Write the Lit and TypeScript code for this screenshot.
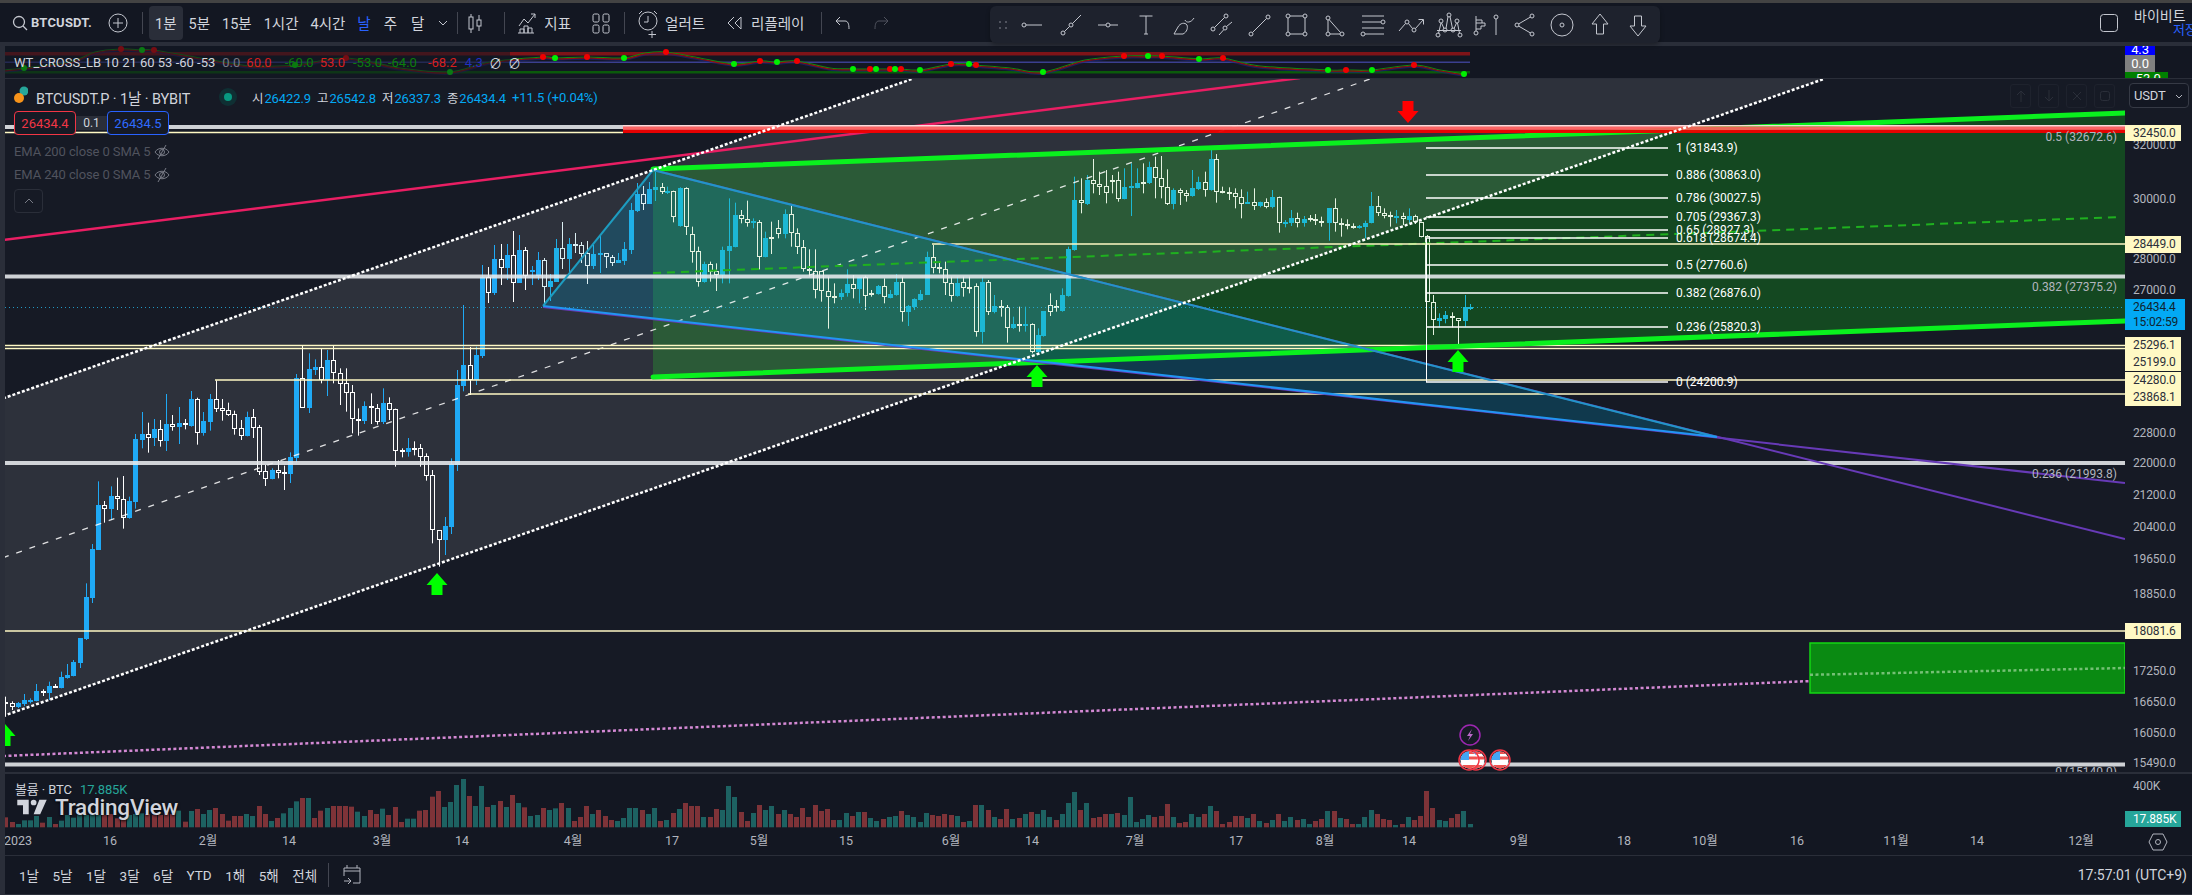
import { LitElement, html, svg, css } from "lit";
import { customElement } from "lit/decorators.js";

type C = number[];
// zoom-space candle data: [high, top, bottom, low, up]
const A: C[] = [[1190,1207,1212,1250,0],[1204,1210,1220,1230,0],[1206,1210,1222,1224,1],[1182,1200,1212,1218,1],[1195,1200,1203,1210,1],[1152,1174,1203,1204,1],[1168,1173,1178,1188,0],[1145,1158,1180,1200,1],[1152,1159,1163,1164,0],[1115,1132,1164,1165,1],[1092,1125,1134,1136,1],[1080,1086,1128,1129,1],[1014,1014,1089,1104,1],[850,891,1017,1020,1],[732,747,893,909,1],[544,615,750,750,1],[603,616,626,668,0],[559,588,627,660,1],[533,589,598,630,0],[528,598,653,686,0],[590,603,654,656,1],[402,417,606,626,1],[336,402,419,445,1],[368,403,413,458,0],[357,387,414,438,1],[360,388,423,440,0],[282,372,423,453,1],[345,373,380,392,0],[321,369,381,432,1],[357,370,376,388,0],[273,297,378,380,1],[293,297,398,434,0],[336,363,399,407,1],[282,297,366,392,1],[241,298,326,336,0],[297,325,332,362,0],[308,331,345,348,0],[332,343,386,404,0],[360,385,407,420,0],[335,351,408,409,1],[327,352,383,414,0],[375,382,515,525,0],[495,514,536,558,0],[505,510,537,538,1],[480,511,518,535,0],[497,516,522,570,0],[457,472,522,549,1],[222,235,473,487,1],[137,235,323,323,0],[160,207,324,339,1],[178,201,210,225,1],[147,202,241,250,0],[150,180,240,288,1],[136,181,220,250,0],[205,220,251,315,0],[205,250,278,335,0],[255,277,358,400,0],[325,357,361,407,0],[304,318,363,372,1],[280,319,325,372,0],[312,325,366,374,0],[265,309,366,372,1],[292,310,329,360,0],[326,328,452,500,0],[445,450,455,472,0],[414,444,456,470,1],[424,445,447,466,0],[432,445,470,500,0],[460,469,527,542,0],[510,526,691,730,0],[690,691,720,800,0],[651,679,720,765,1],[475,491,681,702,1],[210,255,495,513,1],[15,195,258,274,1],[141,196,240,285,0],[140,165,240,255,1]];
// real-pixel y values
const B: C[] = [[265,277,356,358,1],[267,277,293,303,0],[245,259,293,295,1],[244,259,268,285,0],[244,255,268,280,1],[231,255,283,302,0],[235,250,283,283,1],[247,250,276,290,0],[266,270,271,285,1],[252,260,276,280,1],[258,260,287,306,0],[274,281,287,301,1],[239,248,282,282,1],[222,248,259,269,0],[238,244,259,274,1],[233,244,246,253,0],[242,245,254,263,0],[241,253,266,284,0],[245,254,266,269,1],[234,253,255,273,1],[253,253,257,268,0],[255,257,263,266,0],[253,260,263,263,1],[242,249,261,265,1],[203,210,250,254,1],[183,194,211,212,1],[186,194,204,210,0],[182,189,204,204,1],[169,187,190,201,1],[183,187,192,194,0]];
// [zx, high, top, bottom, low, up]
const D7: C[] = [[132,170,183,186,192,1],[144,182,184,260,277,0],[156,172,175,288,290,1],[168,172,175,290,315,0],[180,290,313,365,398,0],[192,350,364,455,470,0],[204,395,402,456,458,1],[216,395,403,425,455,0],[228,400,424,434,483,0],[240,350,360,435,460,1],[252,205,348,362,460,1],[264,218,255,350,352,1],[276,240,255,267,280,0],[288,212,268,278,290,0],[300,265,272,276,295,1],[312,270,277,380,418,0],[324,305,325,380,382,1],[336,275,320,327,372,0],[348,270,295,311,325,0],[362,238,252,312,325,1],[374,225,252,310,350,0],[386,295,310,350,372,0],[398,330,350,418,425,0],[410,358,417,422,440,0],[422,358,422,480,505,0],[434,423,424,483,515,0],[446,440,484,500,596,0],[458,460,497,500,520,0],[472,478,490,500,510,1],[484,418,462,488,500,1],[496,435,462,477,505,0],[508,440,442,477,520,1],[520,437,442,497,540,0],[532,480,489,492,500,0],[544,465,468,492,494,1],[556,445,468,502,520,0],[568,480,492,504,505,1],[580,432,457,495,497,1],[592,440,457,545,575,0],[604,525,528,545,588,1],[616,505,508,530,540,1],[628,480,492,510,512,1],[640,365,380,494,495,1],[652,345,382,413,430,0],[664,395,410,415,430,0],[676,395,416,460,495,0],[688,440,458,497,515,0],[700,440,458,497,500,1],[712,440,457,473,500,0],[724,440,470,472,490,0],[736,460,469,605,620,0],[748,440,457,605,640,1],[760,450,457,545,555,0],[772,495,527,546,550,1],[785,510,527,530,560,0],[797,525,530,593,638,0],[809,560,583,595,597,1],[821,530,583,586,605,0],[833,530,583,586,605,1],[846,580,583,665,670,0],[858,595,615,665,670,1],[869,543,543,617,620,1],[882,490,525,545,558,0],[894,510,527,530,545,0],[906,475,495,543,545,1],[918,350,358,497,500,1],[930,140,210,360,362,1],[943,145,211,220,250,0],[955,135,150,222,225,1],[967,87,150,163,190,0],[979,125,163,170,195,0],[991,120,168,188,220,0],[1003,135,150,152,190,0],[1015,125,150,207,215,0],[1028,115,171,207,208,1],[1040,100,168,173,258,1],[1052,115,158,173,175,1],[1064,100,157,163,190,0],[1076,95,111,160,162,1],[1088,80,111,145,205,0],[1100,78,145,170,205,0],[1112,118,170,222,225,0],[1124,175,180,222,238,1],[1136,175,180,190,225,0],[1148,180,188,197,215,0],[1160,120,175,198,200,1],[1172,140,155,177,180,1],[1185,125,155,179,200,0],[1197,60,88,180,182,1],[1208,72,88,185,218,0],[1220,170,184,187,190,0],[1233,172,186,189,210,0],[1245,175,190,202,235,0],[1257,178,200,222,265,0],[1269,185,217,220,222,1],[1281,175,217,227,240,0],[1293,215,217,229,232,1],[1305,205,215,230,235,0],[1318,180,202,231,235,1],[1330,200,202,280,308,0],[1342,270,277,283,292,1],[1355,240,265,279,288,1],[1367,248,265,278,292,0],[1379,258,267,278,290,1],[1391,255,264,267,275,0],[1402,252,266,270,285,0],[1414,260,272,278,290,0],[1428,235,235,280,332,1],[1440,205,235,279,305,0],[1452,265,279,285,320,0],[1464,268,281,287,298,0],[1476,280,287,293,296,0],[1488,285,288,292,296,1],[1500,272,278,290,325,1],[1512,186,228,278,280,1],[1524,198,228,248,258,0],[1536,235,248,257,265,0],[1548,245,255,261,290,0],[1560,240,258,260,280,1]];
const D3: C[] = [[5,278,288,298,315,0],[17,265,288,300,310,1],[29,284,288,306,312,0],[41,305,307,350,352,0],[53,345,348,545,545,0],[65,525,545,600,645,0],[78,580,595,602,622,1],[90,573,585,597,610,1],[102,577,587,595,622,0],[114,595,595,602,680,0],[128,525,562,603,620,1],[139,552,561,564,570,1]];

interface Candle { x: number; h: number; t: number; b: number; l: number; up: boolean }
const candles: Candle[] = [];
A.forEach((c, i) => candles.push({ x: 5.36 + 6.19 * i, h: 300 + c[0] / 3, t: 300 + c[1] / 3, b: 300 + c[2] / 3, l: 300 + c[3] / 3, up: !!c[4] }));
B.forEach((c, i) => candles.push({ x: 5.36 + 6.19 * (i + A.length), h: c[0], t: c[1], b: c[2], l: c[3], up: !!c[4] }));
D7.forEach((c) => candles.push({ x: 600 + c[0] / 1.96, h: 130 + c[1] / 3, t: 130 + c[2] / 3, b: 130 + c[3] / 3, l: 130 + c[4] / 3, up: !!c[5] }));
D3.forEach((c) => candles.push({ x: 1400 + c[0] / 1.98, h: 120 + c[1] / 3, t: 120 + c[2] / 3, b: 120 + c[3] / 3, l: 120 + c[4] / 3, up: !!c[5] }));

const V4 = "r292 r306 t312 t301 t301 t288 r308 t291 r312 t302 t285 t293 t285 t285 t285 t285 r285 r282 r295 r295 t285 t282 t280 r282 r285 r285 r280 r282 t272 r305 t273 r267 t282 t270 r264 r282 r302 r288 r288 t282 t288 r258 r282 t303 r294 t280 t264 t244 r234 t234 r294 r272 t264 r258 r258 r258 r260 t275 t288 r270 r282 t266 r285 r261 r306 t296 t296 r272 r270 r230 r213 t261 t246 t195 t177 r228 t258 t198 r261 t255 r243 t261 r225 t249 r262 t288 t285 r264 t270 t265 r249 t264 r303 r291 r258 t282 r270 r288 r300 t303 t294 t264 t264 r270 t282 t264 r303 t300 r279 t267 r249 r258 r258 t291 r291 r267 t270 t198 t231 r276 r303 t279 r255 t270 t258 r282 t270".split(" ");
const V9 = "r132 r141 r114 r141 r105 r123 r117 r150 t150 t129 r138 t126 r126 t144 t153 r147 t141 t138 r123 t135 t141 t156 t129 r135 r138 r132 r135 t138 r156 t153 r105 t105 r120 t141 r147 r117 t147 r144 t132 r126 t132 t120 t141 r150 t132 t99 t66 r120 t99 r144 r141 r132 t132 r129 t135 t81 t156 t147 t135 r141 r138 r102 t141 r159 r156 t132 t141 r132 t108 r123 r162 r156 r138 r138 t144 r132 t153 r159 t150 r132 t153 t141 r150 t147 t162 r153 r147 t123 r123 t144 r147 r162 t162 t141 t120 r132 r147 r150 t165 r162 t141 r150 r138 r63 r114 t150 t153 r144 r132 t123 t162".split(" ");
const volumes = [...V4.map((s) => ({ up: s[0] === "t", y: 720 + +s.slice(1) / 3 })), ...V9.map((s) => ({ up: s[0] === "t", y: 770 + +s.slice(1) / 3 }))];
const volStep = (1469.5 - 5.36) / (volumes.length - 1);

const WT: number[][] = [[5,70],[24,68],[70,62],[95,52],[121,49],[142,50],[154,50],[200,58],[250,66],[295,65],[346,58],[400,68],[450,72],[490,62],[543,57],[555,58],[587,57],[624,58],[645,53],[666,52],[700,58],[734,64],[760,61],[777,62],[797,61],[830,68],[853,69],[870,69],[890,69],[901,69],[920,70],[951,64],[969,64],[976,65],[1010,68],[1043,72],[1085,60],[1124,56],[1148,56],[1162,56],[1199,59],[1223,58],[1260,66],[1328,70],[1346,70],[1372,70],[1414,65],[1440,70],[1464,74]];
const smooth = (pts: number[][], dy = 0) => {
  let d = `M${pts[0][0]} ${pts[0][1] + dy}`;
  for (let i = 0; i < pts.length - 1; i++) {
    const p0 = pts[Math.max(0, i - 1)], p1 = pts[i], p2 = pts[i + 1], p3 = pts[Math.min(pts.length - 1, i + 2)];
    d += `C${p1[0] + (p2[0] - p0[0]) / 6} ${p1[1] + (p2[1] - p0[1]) / 6 + dy} ${p2[0] - (p3[0] - p1[0]) / 6} ${p2[1] - (p3[1] - p1[1]) / 6 + dy} ${p2[0]} ${p2[1] + dy}`;
  }
  return d;
};
const DOTS: [number, number, number][] = [[121,49,0],[142,50,1],[154,50,0],[24,68,1],[346,58,0],[295,65,1],[450,72,1],[543,57,0],[555,58,1],[587,57,0],[624,58,1],[666,52,0],[734,64,1],[760,61,0],[777,62,1],[797,61,0],[853,69,1],[870,69,0],[876,69,1],[890,69,0],[895,69,1],[901,69,0],[920,70,1],[951,64,0],[969,64,1],[976,65,0],[1043,72,1],[1124,56,0],[1148,56,1],[1162,56,0],[1199,59,1],[1223,58,0],[1328,70,1],[1346,70,0],[1372,70,1],[1414,65,0],[1464,74,1]];

const FIB: [number, string][] = [[148,"1 (31843.9)"],[175,"0.886 (30863.0)"],[198,"0.786 (30027.5)"],[217,"0.705 (29367.3)"],[230,"0.65 (28927.3)"],[238,"0.618 (28674.4)"],[265,"0.5 (27760.6)"],[293,"0.382 (26876.0)"],[327,"0.236 (25820.3)"],[382,"0 (24200.9)"]];
const FIB2: [number, string][] = [[137,"0.5 (32672.6)"],[287,"0.382 (27375.2)"],[474,"0.236 (21993.8)"],[772,"0 (15140.0)"]];
const AXIS: [number, string][] = [[145,"32000.0"],[199,"30000.0"],[259,"28000.0"],[290,"27000.0"],[433,"22800.0"],[463,"22000.0"],[495,"21200.0"],[527,"20400.0"],[559,"19650.0"],[594,"18850.0"],[671,"17250.0"],[702,"16650.0"],[733,"16050.0"],[763,"15490.0"]];
const TAGS: [number, number, string[]][] = [[125,16,["32450.0"]],[236,17,["28449.0"]],[337,34,["25296.1","25199.0"]],[372,34,["24280.0","23868.1"]],[623,16,["18081.6"]]];
const TIMES: [number, string][] = [[18,"2023"],[110,"16"],[208,"2월"],[289,"14"],[382,"3월"],[462,"14"],[573,"4월"],[672,"17"],[759,"5월"],[846,"15"],[951,"6월"],[1032,"14"],[1135,"7월"],[1236,"17"],[1325,"8월"],[1409,"14"],[1519,"9월"],[1624,"18"],[1705,"10월"],[1797,"16"],[1896,"11월"],[1977,"14"],[2081,"12월"]];

const node = (x: number, y: number) => svg`<circle cx=${x} cy=${y} r="2"></circle>`;
const seg = (a: number, b: number, c: number, d: number) => svg`<line x1=${a} y1=${b} x2=${c} y2=${d}></line>`;
const DRAW = [
  svg`${node(-9, 0)}${seg(-7, 0, 9, 0)}`,
  svg`${node(-8, 8)}${node(0, 0)}${seg(-6.6, 6.6, -1.4, 1.4)}${seg(1.4, -1.4, 10, -10)}`,
  svg`${seg(-10, 0, -2, 0)}${node(0, 0)}${seg(2, 0, 10, 0)}`,
  svg`${seg(-6.5, -9, 6.5, -9)}${seg(0, -9, 0, 9)}${seg(-2, 9, 2, 9)}`,
  svg`<path d="M-10 9H-1C3 7 4 3 3 0C1 -3 -4 -2 -6 2Z"></path><path d="M1 -5C2 -2 7 -2 10 -7"></path>`,
  svg`${node(-9, 4)}${node(4, -9)}${seg(-7.5, 2.5, 2.5, -7.5)}${seg(-3, 10, 1.5, 5)}${node(3, 3)}${seg(4.5, 1.5, 10, -3)}`,
  svg`${node(-9, 9)}${node(8, -8)}${seg(-7.5, 7.5, 6.5, -6.5)}`,
  svg`${node(-9, -9)}${node(8, -9)}${node(-9, 9)}${node(8, 9)}${seg(-7, -9, 6, -9)}${seg(-7, 9, 6, 9)}${seg(-9, -7, -9, 7)}${seg(8, -7, 8, 7)}`,
  svg`${node(-7, -7)}${node(-7, 9)}${node(7, 9)}${seg(-7, -5, -7, 7)}${seg(-5, 9, 5, 9)}${seg(-6, -5.5, 5.5, 7.5)}`,
  svg`${seg(-11, -9, 11, -9)}${seg(-11, -3, 8, -3)}${node(10, -3)}${seg(-11, 3, 11, 3)}${node(-10, 9)}${seg(-8, 9, 11, 9)}`,
  svg`<path d="M-12 6L-5.5 -1.5M-2.500 -1.500L1.500 3.500M4.500 3.500L12 -5M7.500 -5.500H12.500V-.5"></path>${node(-4, -3)}${node(3, 5)}`,
  svg`${node(-8, -4)}${node(0, -10)}${node(8, -4)}${node(-4, 5)}${node(4, 5)}${node(-11, 10)}${node(11, 10)}${seg(-12, 5.500, 12, 5.500)}<path d="M-10.500 8.500L-8 -2M-7.500 -2L-5 3.500M-3 3.500L-1 -8.500M1 -8.500L3.500 3.500M5 3.500L7.500 -2M8.500 -2L10.500 8.500"></path>`,
  svg`${node(-10, 8)}${seg(-10, 6, -10, -9)}<path d="M-10 -5H-4V-2H-1V1H-5V4H-10M-4 -2H-10"></path>${node(10, -8)}${seg(10, -6, 10, 10)}`,
  svg`${node(8, -9)}${node(-7, 0)}${node(8, 9)}${seg(6.5, -8, -5.5, -1)}${seg(-5.500, 1, 6.5, 8)}`,
  svg`<circle cx="0" cy="0" r="11"></circle>${node(0, 0)}`,
  svg`<path d="M0 -11L8 -1H3.500V9H-3.500V-1H-8Z"></path>`,
  svg`<path d="M0 11L8 1H3.500V-9H-3.500V1H-8Z"></path>`,
];

@customElement("app-root")
export class AppRoot extends LitElement {
  static styles = css`
    :host { display: block; width: 2192px; height: 895px; overflow: hidden; background: #2a2e39; position: relative;
      font-family: Roboto, "Noto Sans CJK KR", sans-serif; color: #d1d4dc; }
    svg { display: block; }
    .strip { height: 3px; background: #434343; }
    .toolbar { height: 39px; background: #131722; display: flex; align-items: center; font-size: 14.5px; white-space: nowrap; position: relative; }
    .ic { fill: none; stroke: #c4c7cf; stroke-width: 1; flex: none; }
    .ic.dim { stroke: #50535e; }
    .m11 { margin-left: 11px; } .m16 { margin-left: 16px; } .m7 { margin-left: 7px; } .m6 { margin-left: 6px; }
    .m18 { margin-left: 18px; } .m19 { margin-left: 19px; } .m12 { margin-left: 12px; } .m21 { margin-left: 21px; } .m17 { margin-left: 17px; } .m13 { margin-left: 13px; }
    .m4 { margin-left: 4px; } .m5 { margin-left: 5px; }
    .sym { font-weight: 700; font-size: 13px; letter-spacing: .2px; margin-left: 2px; width: 60px; }
    .div { width: 1px; height: 22px; background: #434651; flex: none; }
    .tf { display: flex; height: 34px; margin-left: 6px; }
    .tf span { display: flex; align-items: center; padding: 0 6px; border-radius: 4px; }
    .tf .wide { padding: 0 7px; }
    .tf .on { background: #2a2e39; }
    .tf .blue { color: #2962ff; }
    .drawbar { position: absolute; left: 990px; top: 3px; width: 670px; height: 37px; background: #1e222d; border-radius: 6px; display: flex; align-items: center; padding-left: 24px; box-sizing: border-box; box-shadow: 0 2px 4px rgba(0,0,0,.3); z-index: 3; }
    .slot { width: 37.8px; display: flex; justify-content: center; flex: none; }
    .slot svg { fill: none; stroke: #c4c7cf; stroke-width: 1; }
    .grip { position: absolute; left: 7px; top: 13px; width: 10px; height: 12px; background-image: radial-gradient(#50535e 1px, transparent 1.2px); background-size: 6px 6px; }
    .right { margin-left: auto; display: flex; align-items: center; }
    .broker { width: 58px; margin-left: 15px; overflow: hidden; line-height: 14px; font-size: 14px; }
    .broker div:last-child { color: #2962ff; padding-left: 39px; font-size: 13px; white-space: nowrap; width: 30px; }
    .gap4 { height: 4px; }
    .body { padding-left: 5px; }
    .pane { display: grid; grid-template-columns: 2120px 67px; background: #161a25; position: relative; }
    .ind { height: 32px; background: #131722; margin-bottom: 1px; }
    .main { height: 693px; margin-bottom: 2px; }
    .vol { height: 54px; background: #131722; }
    .plot { position: relative; overflow: hidden; }
    .axis { position: relative; overflow: hidden; font-size: 12px; letter-spacing: -.15px; }
    .indlegend { position: absolute; left: 0; top: 0; bottom: 0; width: 505px; background: rgba(19,23,34,.55); display: flex; align-items: center; padding-left: 9px; box-sizing: border-box; gap: 6px; font-size: 13px; color: #d1d4dc; white-space: nowrap; }
    .indlegend .g { color: #0b7d0b; } .indlegend .r { color: #d61f1f; } .indlegend .mute { color: #787b86; } .indlegend .b { color: #2030c0; }
    .x7 { margin-left: 7px; } .x5 { margin-left: 5px; } .x2 { margin-left: 2px; } .x1 { margin-left: 1px; }
    .ibox { position: absolute; left: 0; display: flex; justify-content: center; align-items: center; color: #fff; font-size: 13px; }
    .i1 { top: 0; height: 9px; width: 30px; background: #0000ff; align-items: flex-end; overflow: hidden; line-height: 10px; }
    .i2 { top: 9px; height: 17px; width: 30px; background: #808080; }
    .i3 { top: 26px; height: 6px; width: 43px; background: #008000; align-items: flex-start; overflow: hidden; line-height: 14px; }
    .legend { position: absolute; left: 0; top: 0; padding: 9px 0 0 9px; font-size: 12.5px; white-space: nowrap; }
    .row1 { display: flex; align-items: center; height: 18px; }
    .coin { position: absolute; left: 9px; top: 6px; }
    .title { font-size: 14.5px; margin-left: 22px; width: 165px; letter-spacing: -.1px; }
    .stat { margin-left: 18px; width: 33px; }
    .ohlc { color: #03a9f4; display: flex; gap: 6px; align-items: center; font-size: 13px; letter-spacing: -.1px; }
    .ohlc b { font-weight: 400; color: #d1d4dc; margin-right: 1px; font-size: 12.5px; }
    .row2 { display: flex; align-items: center; height: 24px; margin-top: 5px; }
    .px { width: 62px; height: 24px; box-sizing: border-box; border-radius: 4px; display: flex; align-items: center; justify-content: center; background: #161a25; font-size: 13px; }
    .px.r { border: 1px solid #f23645; color: #f23645; }
    .px.bl { border: 1px solid #2962ff; color: #2f6bff; }
    .spread { width: 31px; text-align: center; font-size: 12px; color: #d1d4dc; background: #2a2e39; }
    .ema { height: 23px; display: flex; align-items: center; color: #50535e; font-size: 13px; width: 160px; letter-spacing: -.1px; }
    .ema span { width: 139px; }
    .ema svg { stroke: #787b86; fill: none; }
    .ema1 { margin-top: 5px; }
    .fold { width: 29px; height: 24px; margin-top: 3px; border: 1px solid #2a2e39; border-radius: 4px; box-sizing: border-box; display: flex; justify-content: center; align-items: center; }
    .fold svg { stroke: #787b86; fill: none; }
    .pills { position: absolute; left: 2005px; top: 5px; display: flex; gap: 7px; }
    .pill { width: 21px; height: 24px; display: flex; align-items: center; justify-content: center; border: 1px solid #1e222d; border-radius: 3px; box-sizing: border-box; }
    .pill svg { stroke: #2a2e39; fill: none; }
    .usdt { position: absolute; left: 4px; top: 4px; width: 60px; height: 25px; border: 1px solid #363a45; border-radius: 4px; box-sizing: border-box; display: flex; align-items: center; padding: 0 4px; justify-content: space-between; background: #131722; font-size: 13px; z-index: 2; }
    .usdt svg { stroke: #b2b5be; fill: none; }
    .lab { position: absolute; left: 8px; transform: translateY(-50%); color: #b2b5be; }
    .tag { position: absolute; left: 0; width: 56px; background: #fff9c4; color: #2b2f3a; padding-left: 8px; box-sizing: border-box; display: flex; flex-direction: column; justify-content: space-around; line-height: 15px; }
    .now { position: absolute; left: 0; top: 220px; width: 60px; height: 31px; background: #03a9f4; color: #10242f; padding-left: 8px; box-sizing: border-box; line-height: 15px; display: flex; flex-direction: column; justify-content: center; font-size: 12px; }
    .vt { position: absolute; left: 0; bottom: 1px; width: 56px; height: 16px; background: #26a69a; color: #fff; padding-left: 8px; box-sizing: border-box; line-height: 16px; }
    .vt400 { position: absolute; left: 8px; top: 5px; color: #b2b5be; }
    .vlegend { position: absolute; left: 10px; top: 8px; height: 16px; line-height: 16px; font-size: 13px; white-space: nowrap; display: flex; gap: 8px; letter-spacing: -.1px; }
    .vlegend i { font-style: normal; color: #26a69a; }
    .tvlogo { position: absolute; left: 12px; top: 24px; height: 18px; line-height: 18px; display: flex; align-items: center; gap: 8px; color: #d1d4dc; font-size: 22.5px; font-weight: 500; letter-spacing: -.2px; text-shadow: 0 1px 3px #000; }
    .tvlogo svg { fill: #d1d4dc; }
    .time { height: 27px; background: #131722; margin-bottom: 1px; display: grid; grid-template-columns: 2120px 67px; }
    .time text { fill: #b2b5be; font-size: 12.5px; text-anchor: middle; font-family: Roboto, "Noto Sans CJK KR", sans-serif; }
    .gear { display: flex; justify-content: center; padding: 2px 0 0 0; margin-left: -1px; }
    .gear svg { stroke: #b2b5be; fill: none; }
    .bottom { height: 38px; margin-bottom: 1px; background: #131722; display: flex; align-items: center; padding-left: 14px; gap: 13.5px; font-size: 13.5px; }
    .bottom .div { margin-left: -3px; height: 24px; }
    .bottom .clock { margin-left: auto; padding-right: 5px; font-size: 14px; letter-spacing: 0; }
    .cal { fill: none; stroke: #b2b5be; }
    .fib { fill: #fff; font-size: 12px; font-family: Roboto, sans-serif; dominant-baseline: central; }
    .fib2 { fill: #b2b5be; font-size: 12px; font-family: Roboto, sans-serif; text-anchor: end; dominant-baseline: central; }
  `;

  private candle(c: Candle) {
    const cx = Math.round(c.x);
    const col = c.x > 653 ? (c.up ? "#1cb8d4" : "#e4f2e0") : c.x > 543 ? (c.up ? "#1fb0e8" : "#dbeef2") : (c.up ? "#1fa9f5" : "#ffffff");
    const t = Math.round(c.t), b = Math.max(Math.round(c.b), t + 2);
    const wick = svg`<line x1=${cx + .5} x2=${cx + .5} y1=${c.h} y2=${t} stroke=${col}></line><line x1=${cx + .5} x2=${cx + .5} y1=${b} y2=${c.l} stroke=${col}></line>`;
    return c.up
      ? svg`${wick}<rect x=${cx - 2} y=${t} width="5" height=${b - t} fill=${col}></rect>`
      : svg`${wick}<rect x=${cx - 1.5} y=${t + .5} width="4" height=${b - t - 1} fill="none" stroke=${col}></rect>`;
  }

  private upArrow(cx: number, top: number, fill = "#00ff00") {
    return svg`<polygon fill=${fill} points="${cx},${top} ${cx + 10.500},${top + 12} ${cx + 5.500},${top + 12} ${cx + 5.500},${top + 22} ${cx - 5.500},${top + 22} ${cx - 5.500},${top + 12} ${cx - 10.500},${top + 12}"></polygon>`;
  }

  private flag(cx: number, cy: number, id: string) {
    return svg`<clipPath id=${id}><circle cx=${cx} cy=${cy} r="8.500"></circle></clipPath>
      <circle cx=${cx} cy=${cy} r="8.500" fill="#fff"></circle>
      <g clip-path="url(#${id})">
        <rect x=${cx - 9} y=${cy - 9} width="18" height="3" fill="#ef5350"></rect>
        <rect x=${cx - 9} y=${cy - 3.500} width="18" height="3" fill="#ef5350"></rect>
        <rect x=${cx - 9} y=${cy + 5} width="18" height="4" fill="#ef5350"></rect>
        <rect x=${cx - 9} y=${cy - 9} width="9" height="9" fill="#42a5f5"></rect>
      </g>
      <circle cx=${cx} cy=${cy} r="10" fill="none" stroke="#f23645" stroke-width="1.500"></circle>`;
  }

  private chart() {
    const hl = (y: number, x1 = 5, x2 = 2125) => svg`<line x1=${x1} x2=${x2} y1=${y} y2=${y} stroke="#fff9c4" stroke-width="1.500"></line>`;
    const thick = (y: number) => svg`<rect x="5" y=${y - 2} width="2120" height="4" fill="rgba(232,234,238,.88)"></rect>`;
    return html`<svg width="2120" height="693" viewBox="5 79 2120 693">
      <polygon points="653,169 2125,113 2125,321 653,377" fill="rgba(20,92,32,.7)"></polygon>
      <polygon points="3,398 912,79 1824,79 3,716" fill="rgba(255,255,255,.1)"></polygon>
      <polygon points="543,306 653,170 1717,437" fill="rgba(0,150,200,.25)"></polygon>
      ${candles.map((c) => this.candle(c))}
      <line x1="5" x2="2125" y1="307.500" y2="307.500" stroke="#25b6e8" stroke-dasharray="1 3" opacity=".8"></line>
      <line x1="3" y1="240" x2="1300" y2="78" stroke="#e91e63" stroke-width="2.500"></line>
      <path d="M3 557.700L1370 79" stroke="rgba(255,255,255,.85)" stroke-width="1.300" stroke-dasharray="6 8" fill="none"></path>
      <path d="M653 273L2120 217" stroke="#1fb01f" stroke-width="2" stroke-dasharray="8 6" fill="none"></path>
      <path d="M3 756L2125 668" stroke="#d489d4" stroke-width="2.500" stroke-dasharray="3 2.500" fill="none"></path>
      ${hl(132.500, 5, 623)}${hl(345.500)}${hl(348.500)}${hl(380, 215)}${hl(394, 468)}${hl(631)}${hl(244, 932)}
      ${thick(127)}${thick(276.500)}${thick(463)}${thick(764.500)}
      <line x1="653" y1="169" x2="2125" y2="113" stroke="#0af01e" stroke-width="5" stroke-linecap="round"></line>
      <line x1="653" y1="377" x2="2125" y2="321" stroke="#0af01e" stroke-width="5" stroke-linecap="round"></line>
      <rect x="623" y="125" width="1502" height="1.500" fill="#ffd9d9" opacity=".95"></rect>
      <rect x="623" y="126.500" width="1502" height="3.500" fill="#ff5a5a" opacity=".92"></rect>
      <rect x="623" y="130" width="1502" height="3" fill="#f00000" opacity=".95"></rect>
      <line x1="653" y1="170" x2="2125" y2="539" stroke="#673ab7" stroke-width="2"></line>
      <line x1="543" y1="307" x2="2125" y2="483" stroke="#673ab7" stroke-width="2"></line>
      <line x1="653" y1="170" x2="1717" y2="437" stroke="#2196c8" stroke-width="2"></line>
      <line x1="543" y1="306" x2="1717" y2="437" stroke="#2196f3" stroke-width="2"></line>
      <line x1="543" y1="306" x2="653" y2="170" stroke="#1d9cc0" stroke-width="2"></line>
      <path d="M3 398.400L912 79M3 716L1824 79" stroke="#fff" stroke-width="2.500" stroke-dasharray="3 2" fill="none"></path>
      <rect x="1810" y="643" width="315" height="50" fill="#0a8a12" stroke="#13d813" stroke-width="1.500"></rect>
      <path d="M1810 674.800L2125 668" stroke="#75c075" stroke-width="2.500" stroke-dasharray="3 2.500" fill="none"></path>
      ${FIB.map(([y, t]) => svg`<line x1="1426" x2="1668" y1=${y} y2=${y} stroke="#fff" stroke-width="1.500"></line><text class="fib" x="1676" y=${y}>${t}</text>`)}
      <line x1="1426.500" x2="1426.500" y1="238" y2="382" stroke="#fff"></line>
      ${FIB2.map(([y, t]) => svg`<text class="fib2" x="2117" y=${y}>${t}</text>`)}
      ${this.upArrow(437, 573)}${this.upArrow(1037, 365)}${this.upArrow(1458, 350)}${this.upArrow(5, 724)}
      <polygon fill="#ff0000" points="1408,123 1397.500,111 1402.500,111 1402.500,101 1413.500,101 1413.500,111 1418.500,111"></polygon>
      <circle cx="1470" cy="735" r="10" fill="#161a25" stroke="#9c27b0" stroke-width="1.500"></circle>
      <path d="M1472 729L1467 736H1470L1468 741L1473 734H1470Z" fill="#ba68c8"></path>
      ${this.flag(1476, 760, "f1")}${this.flag(1469, 760, "f2")}${this.flag(1500, 760, "f3")}
    </svg>`;
  }

  render() {
    const eye = html`<svg width="18" height="16" viewBox="0 0 18 16"><path d="M2 8C5 3 13 3 16 8C13 13 5 13 2 8Z"></path><circle cx="9" cy="8" r="2.500"></circle><path d="M13 1L5 15"></path></svg>`;
    return html`
      <div class="strip"></div>
      <div class="toolbar">
        <svg class="ic m11" width="18" height="26" viewBox="0 0 18 26"><circle cx="8" cy="12" r="5.500" stroke-width="1.300"></circle><path d="M12 16L16 20" stroke-width="1.300"></path></svg>
        <span class="sym">BTCUSDT.</span>
        <svg class="ic m16" width="22" height="26" viewBox="0 0 22 26"><circle cx="11" cy="13" r="9"></circle><path d="M11 8V18M6 13H16"></path></svg>
        <div class="div m13"></div>
        <div class="tf"><span class="on">1분</span><span>5분</span><span>15분</span><span>1시간</span><span>4시간</span><span class="blue">날</span><span class="wide">주</span><span class="wide">달</span></div>
        <svg class="ic m5" width="14" height="26" viewBox="0 0 14 26"><path d="M3 11L7 15L11 11"></path></svg>
        <div class="div m7"></div>
        <svg class="ic m6" width="22" height="26" viewBox="0 0 22 26"><rect x="5" y="7" width="4" height="12"></rect><path d="M7 4V7M7 19V23M15 5V10M15 16V21"></path><rect x="13" y="10" width="4" height="6"></rect></svg>
        <div class="div m18"></div>
        <svg class="ic m11" width="24" height="26" viewBox="0 0 24 26"><path d="M3 16L8 9L12 13L19 4"></path><path d="M15 4H19V8"></path><path d="M4 23V19H8V23M8 23V16H12V23M12 23V18H16V23M2 23H18"></path></svg>
        <span class="m4">지표</span>
        <svg class="ic m19" width="22" height="26" viewBox="0 0 22 26"><rect x="3" y="4" width="6" height="8" rx="1.500"></rect><rect x="13" y="4" width="6" height="8" rx="1.500"></rect><rect x="3" y="15" width="6" height="8" rx="1.500"></rect><rect x="13" y="15" width="6" height="8" rx="1.500"></rect></svg>
        <div class="div m12"></div>
        <svg class="ic m11" width="24" height="30" viewBox="0 0 24 30"><circle cx="12" cy="13" r="9"></circle><path d="M12 8V14H8M3 6L6 3M21 6L18 3M16 23V30M12.500 26.500H20"></path></svg>
        <span class="m5">얼러트</span>
        <svg class="ic m21" width="20" height="26" viewBox="0 0 20 26"><path d="M8 7L2 13L8 19M15 7L9 13L15 19V7Z"></path></svg>
        <span class="m5">리플레이</span>
        <div class="div m17"></div>
        <svg class="ic m11" width="20" height="26" viewBox="0 0 20 26"><path d="M7 7L3 11L7 15M3 11H12C15 11 16 14 16 19"></path></svg>
        <svg class="ic dim m18" width="20" height="26" viewBox="0 0 20 26"><path d="M13 7L17 11L13 15M17 11H8C5 11 4 14 4 19"></path></svg>
        <div class="drawbar"><div class="grip"></div>${DRAW.map((d) => html`<div class="slot"><svg width="30" height="30" viewBox="-15 -15 30 30">${d}</svg></div>`)}</div>
        <div class="right">
          <svg class="ic" width="20" height="22" viewBox="0 0 20 22"><rect x="1.500" y="2.500" width="17" height="17" rx="3"></rect></svg>
          <div class="broker"><div>바이비트</div><div>저장</div></div>
        </div>
      </div>
      <div class="gap4"></div>
      <div class="body">
        <div class="pane ind">
          <div class="plot">
            <svg width="2120" height="32" viewBox="5 46 2120 32">
              <rect x="5" y="52" width="1465" height="3.500" fill="#7f1418"></rect>
              <rect x="5" y="61.500" width="1465" height="1.500" fill="#3b3f8f"></rect>
              <rect x="5" y="71" width="1465" height="2.500" fill="#0b5a0b"></rect>
              <path d=${smooth(WT, 2)} fill="none" stroke="#1a237e" stroke-width="1.500" opacity=".6"></path>
              <path d=${smooth(WT)} fill="none" stroke="#0f8a0f" stroke-width="1.200"></path>
              <path d=${smooth(WT, 1)} fill="none" stroke="#8f1010" stroke-width="1.200"></path>
              ${DOTS.map(([x, y, g]) => svg`<circle cx=${x} cy=${y} r="3" fill=${g ? "#00f000" : "#f00000"}></circle>`)}
            </svg>
            <div class="indlegend"><span>WT_CROSS_LB 10 21 60 53 -60 -53</span><span class="mute x1">0.0</span><span class="r">60.0</span><span class="g x7">-60.0</span><span class="r">53.0</span><span class="g x2">-53.0</span><span class="g">-64.0</span><span class="r x5">-68.2</span><span class="b x2">4.3</span><span>∅</span><span>∅</span></div>
          </div>
          <div class="axis">
            <div class="ibox i1">4.3</div><div class="ibox i2">0.0</div><div class="ibox i3">-53.0</div>
          </div>
        </div>
        <div class="pane main">
          <div class="plot">
            ${this.chart()}
            <div class="legend">
              <div class="row1">
                <svg class="coin" width="14" height="18" viewBox="0 0 14 18"><circle cx="10" cy="6" r="4.500" fill="#26a69a"></circle><circle cx="5" cy="13" r="5" fill="#f7931a"></circle></svg>
                <span class="title">BTCUSDT.P · 1날 · BYBIT</span>
                <svg class="stat" height="18" viewBox="0 0 33 18"><circle cx="9" cy="9" r="9" fill="#0f2f33"></circle><circle cx="9" cy="9" r="4" fill="#089981"></circle></svg>
                <span class="ohlc"><span><b>시</b>26422.9</span><span><b>고</b>26542.8</span><span><b>저</b>26337.3</span><span><b>종</b>26434.4</span><span>+11.5 (+0.04%)</span></span>
              </div>
              <div class="row2"><span class="px r">26434.4</span><span class="spread">0.1</span><span class="px bl">26434.5</span></div>
              <div class="ema ema1"><span>EMA 200 close 0 SMA 5</span>${eye}</div>
              <div class="ema"><span>EMA 240 close 0 SMA 5</span>${eye}</div>
              <div class="fold"><svg width="12" height="12" viewBox="0 0 12 12"><path d="M2 8L6 4L10 8"></path></svg></div>
            </div>
            <div class="pills">
              <div class="pill"><svg width="12" height="14" viewBox="0 0 12 14"><path d="M6 13V2M2 6L6 2L10 6"></path></svg></div>
              <div class="pill"><svg width="12" height="14" viewBox="0 0 12 14"><path d="M6 1V12M2 8L6 12L10 8"></path></svg></div>
              <div class="pill"><svg width="12" height="14" viewBox="0 0 12 14"><path d="M2 3L10 11M10 3L2 11"></path></svg></div>
              <div class="pill"><svg width="12" height="14" viewBox="0 0 12 14"><rect x="1.500" y="2.500" width="9" height="9" rx="2"></rect></svg></div>
            </div>
          </div>
          <div class="axis">
            <div class="usdt"><span>USDT</span><svg width="10" height="10" viewBox="0 0 10 10"><path d="M2 4L5 7L8 4"></path></svg></div>
            ${AXIS.map(([y, t]) => html`<div class="lab" style="top:${y - 79}px">${t}</div>`)}
            ${TAGS.map(([y, h, ts]) => html`<div class="tag" style="top:${y - 79}px;height:${h}px">${ts.map((t) => html`<span>${t}</span>`)}</div>`)}
            <div class="now"><span>26434.4</span><span>15:02:59</span></div>
          </div>
        </div>
        <div class="pane vol">
          <div class="plot">
            <svg width="2120" height="54" viewBox="5 774 2120 54">
              ${volumes.map((v, i) => svg`<rect x=${Math.round(5.36 + volStep * i) - 2} y=${v.y} width="5" height=${827.3 - v.y} fill=${v.up ? "#1d6262" : "#7e3338"}></rect>`)}
            </svg>
            <div class="vlegend"><span>볼륨 · BTC</span><i>17.885K</i></div>
            <div class="tvlogo"><svg width="30" height="18" viewBox="0 0 36 22"><path d="M14 2H0V9H7V20H14V2ZM28 20H20L27 2H36L28 20ZM20 9A3.500 3.500 0 1 0 20 2A3.500 3.500 0 0 0 20 9Z"></path></svg><span>TradingView</span></div>
          </div>
          <div class="axis"><div class="vt400">400K</div><div class="vt">17.885K</div></div>
        </div>
        <div class="time">
          <svg width="2120" height="27" viewBox="5 828 2120 27">${TIMES.map(([x, t]) => svg`<text x=${x} y="845">${t}</text>`)}</svg>
          <div class="gear"><svg width="20" height="24" viewBox="0 0 20 24"><path d="M5 4H15L19 12L15 20H5L1 12Z"></path><circle cx="10" cy="12" r="2.500"></circle></svg></div>
        </div>
        <div class="bottom">
          ${["1날", "5날", "1달", "3달", "6달", "YTD", "1해", "5해", "전체"].map((t) => html`<span>${t}</span>`)}
          <div class="div"></div>
          <svg class="cal" width="20" height="24" viewBox="0 0 20 24"><path d="M2 8H18M5 2V5M15 2V5M18 20V5H2V13M11 20H18M2 18H9M6 15L9 18L6 21"></path></svg>
          <span class="clock">17:57:01 (UTC+9)</span>
        </div>
      </div>
    `;
  }
}
